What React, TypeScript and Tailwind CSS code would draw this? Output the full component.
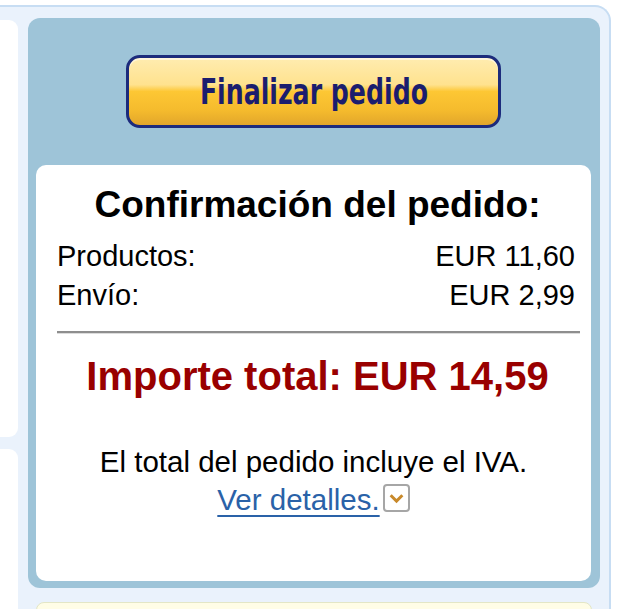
import React from "react";

export default function App() {
  return (
    <div className="w-[620px] h-[609px] bg-white overflow-hidden pt-[5px] font-['Liberation_Sans',Arial,sans-serif]">
      <div className="w-[611px] h-[700px] bg-[#eaf2fc] border-t-2 border-r-2 border-[#c7ddf3] rounded-tr-[16px] flex">
        <div className="w-[18px] shrink-0 flex flex-col gap-[12px] pt-[13px]">
          <div className="shrink-0 h-[417px] bg-white rounded-r-[9px]" />
          <div className="shrink-0 h-[300px] bg-white rounded-r-[9px]" />
        </div>
        <div className="ml-[10px] w-[572px] shrink-0 flex flex-col pt-[11px]">
          <div className="bg-[#9ec4d8] rounded-[12px] pt-[37px] pl-[8px] pr-[9px] pb-[7px] flex flex-col">
            <button className="self-center w-[375px] h-[73px] border-[3px] border-[#1c2b7c] rounded-[14px] bg-[linear-gradient(to_bottom,#ffecb0_0%,#ffe28e_40%,#fdc734_50%,#f5bb2d_78%,#e2a62b_100%)] shadow-[inset_0_2px_0_rgba(255,255,255,0.55)] flex items-center justify-center">
              <span className="inline-block scale-x-[0.7] font-['DejaVu_Sans',sans-serif] font-bold text-[36px] leading-[40px] text-[#1b1d6e] whitespace-nowrap">
                Finalizar pedido
              </span>
            </button>
            <div className="mt-[37px] h-[416px] bg-white rounded-[10px] flex flex-col">
              <div className="pt-[20px] pl-[8px] text-center font-bold text-[37px] leading-[40px] text-black">
                Confirmación del pedido:
              </div>
              <div className="mt-[12px] pl-[21px] pr-[16px] text-[29px] leading-[39px] text-black">
                <div className="flex justify-between">
                  <span>Productos:</span>
                  <span>EUR 11,60</span>
                </div>
                <div className="flex justify-between">
                  <span>Envío:</span>
                  <span>EUR 2,99</span>
                </div>
              </div>
              <div className="mt-[16px] ml-[21px] mr-[11px] h-[3px] border-t-2 border-b border-t-[#8e8e8e] border-b-[#dcdcdc]" />
              <div className="mt-[20px] pl-[8px] text-center font-bold text-[40px] leading-[44px] text-[#990000]">
                Importe total: EUR 14,59
              </div>
              <div className="mt-[45px] text-center text-[29.5px] leading-[38px] text-black">
                <div>El total del pedido incluye el IVA.</div>
                <div className="flex justify-center items-start">
                  <span className="text-[#2a62a8] underline decoration-2 underline-offset-[5px]">Ver detalles.</span>
                  <span className="ml-[3px] mt-[3px] w-[27px] h-[28px] border-2 border-[#a6a6a6] rounded-[4px] flex items-center justify-center bg-white">
                    <svg width="17" height="13" viewBox="0 0 16 12">
                      <path d="M2.5 3 L8 8.5 L13.5 3" fill="none" stroke="#c8892a" strokeWidth="2.8" />
                    </svg>
                  </span>
                </div>
              </div>
            </div>
          </div>
          <div className="mt-[14px] mx-[8px] h-[40px] bg-[#fffde6] border border-[#e3e6c6] rounded-[8px]" />
        </div>
      </div>
    </div>
  );
}
